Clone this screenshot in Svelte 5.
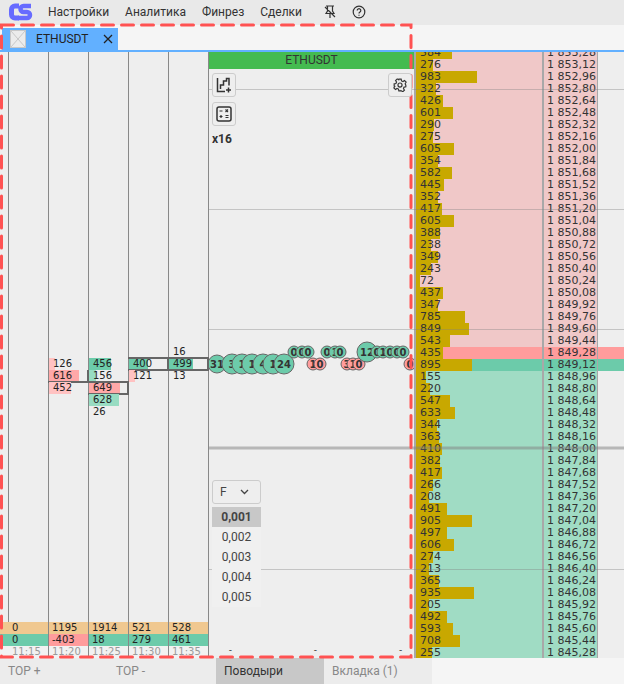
<script>
  const menu = ['Настройки', 'Аналитика', 'Финрез', 'Сделки'];

  const columns = [
    { time: '11:15', top: '0', delta: '0', cells: [] },
    {
      time: '11:20', top: '1195', delta: '-403', neg: true,
      cells: [
        null,
        { v: 126, c: 'pink' },
        { v: 616, c: 'red', poc: 'open' },
        { v: 452, c: 'pink' }
      ]
    },
    {
      time: '11:25', top: '1914', delta: '18',
      cells: [
        null,
        { v: 456, c: 'green' },
        { v: 156, c: 'mint' },
        { v: 649, c: 'red', poc: 'box' },
        { v: 628, c: 'mint' },
        { v: 26, c: 'none' }
      ]
    },
    {
      time: '11:30', top: '521', delta: '279',
      cells: [
        null,
        { v: 400, c: 'green', poc: 'box' },
        { v: 121, c: 'pink' }
      ]
    },
    {
      time: '11:35', top: '528', delta: '461',
      cells: [
        { v: 16, c: 'none' },
        { v: 499, c: 'green', poc: 'box' },
        { v: 13, c: 'none' }
      ]
    }
  ];

  const volumes = [
    584, 276, 983, 322, 426, 601, 290, 275, 605, 354, 582, 445, 352, 417, 605, 388, 238,
    349, 243, 72, 437, 347, 785, 849, 543, 435, 895, 155, 220, 547, 633, 344, 363, 410,
    382, 417, 266, 208, 491, 905, 497, 606, 274, 213, 365, 935, 205, 492, 593, 708, 255
  ];

  function price(i) {
    const s = (1853.28 - i * 0.16).toFixed(2).replace('.', ',');
    return s[0] + '\u00a0' + s.slice(1);
  }

  function rowClass(i) {
    if (i === 25) return 'best-ask';
    if (i === 26) return 'best-bid';
    return i < 25 ? 'ask' : 'bid';
  }

  // trade bubbles, in draw order
  const bubbles = [
    { x: 8, y: 312, r: 9, t: '31' },
    { x: 23, y: 312, r: 10, t: '3' },
    { x: 33, y: 312, r: 10, t: '1' },
    { x: 43, y: 312, r: 10, t: '1' },
    { x: 54, y: 312, r: 10, t: '4' },
    { x: 64, y: 312, r: 10, t: '1' },
    { x: 75, y: 312, r: 10, t: '24' },
    { x: 85, y: 300, r: 6, t: '0' },
    { x: 93, y: 300, r: 6, t: '0' },
    { x: 99, y: 300, r: 6, t: '0' },
    { x: 104, y: 312, r: 6, t: '1', s: true },
    { x: 111, y: 312, r: 6, t: '0', s: true },
    { x: 118, y: 300, r: 6, t: '0' },
    { x: 126, y: 300, r: 6, t: '1' },
    { x: 131, y: 300, r: 6, t: '0' },
    { x: 138, y: 312, r: 6, t: '3', s: true },
    { x: 144, y: 312, r: 6, t: '1', s: true },
    { x: 150, y: 312, r: 6, t: '0', s: true },
    { x: 158, y: 300, r: 10, t: '12' },
    { x: 168, y: 300, r: 6, t: '0' },
    { x: 174, y: 300, r: 6, t: '1' },
    { x: 181, y: 300, r: 6, t: '0' },
    { x: 188, y: 300, r: 6, t: '0' },
    { x: 194, y: 300, r: 6, t: '0' },
    { x: 201, y: 312, r: 6, t: '0', s: true }
  ];

  const steps = ['0,002', '0,003', '0,004', '0,005'];
</script>

<div class="page">
  <header class="menu">
    <svg class="logo" width="24" height="18" viewBox="0 0 24 18">
      <path d="M10 3H6a3.5 3.5 0 0 0-3.500 3.500v5A3.500 3.500 0 0 0 6 15h4" fill="none" stroke="#676bff" stroke-width="5" />
      <path d="M22 3h-7.500a3 3 0 0 0 0 6h3.500a3 3 0 0 1 0 6H9" fill="none" stroke="#676bff" stroke-width="4.500" />
    </svg>
    <nav>
      {#each menu as item}
        <span>{item}</span>
      {/each}
    </nav>
    <svg class="pin" width="14" height="14" viewBox="0 0 14 14" fill="none" stroke="#333" stroke-width="1.200">
      <path d="M3 1h8M4.500 1v5L3 8.500h8L9.500 6V1M7 8.500V13M2 2l10 10" />
    </svg>
    <svg class="help" width="14" height="14" viewBox="0 0 14 14" fill="none" stroke="#333" stroke-width="1.200">
      <circle cx="7" cy="7" r="5.800" />
      <path d="M5.200 5.500a1.800 1.800 0 1 1 2.700 1.600c-.6.300-.9.700-.9 1.300" />
      <path d="M7 9.800v1" />
    </svg>
  </header>

  <div class="tabs">
    <div class="tab">
      <svg width="16" height="18" viewBox="0 0 16 18">
        <rect x=".5" y=".5" width="15" height="17" fill="#ececec" stroke="#c8c8c8" />
        <path d="M1 1l14 16M15 1L1 17" stroke="#c8c8c8" />
      </svg>
      <span class="tab-title">ETHUSDT</span>
      <svg class="tab-close" width="10" height="10" viewBox="0 0 10 10">
        <path d="M1 1l8 8M9 1L1 9" stroke="#222" stroke-width="1.300" />
      </svg>
    </div>
  </div>

  <main class="main">
    <section class="clusters">
      <div class="gutter">
        <div class="stats">
          <div class="stat top"></div>
          <div class="stat delta"></div>
          <div class="stat time"></div>
        </div>
      </div>
      {#each columns as col}
        <div class="col">
          <div class="cells">
            {#each col.cells as cell}
              {#if cell}
                <div class="cell {cell.poc || ''}">
                  <i class={cell.c} style="width: {cell.v * 0.048}px"></i>
                  <span>{cell.v}</span>
                </div>
              {:else}
                <div class="cell"></div>
              {/if}
            {/each}
          </div>
          <div class="stats">
            <div class="stat top">{col.top}</div>
            <div class="stat delta" class:neg={col.neg}>{col.delta}</div>
            <div class="stat time">{col.time}</div>
          </div>
        </div>
      {/each}
    </section>

    <section class="chart">
      <div class="chart-head">ETHUSDT</div>
      <svg class="bubbles" width="205" height="589" viewBox="0 0 205 589">
        {#each bubbles as b}
          <circle cx={b.x} cy={b.y - 17} r={b.r} fill={b.s ? '#ff9c9c' : '#6ccbaa'} stroke="#666" stroke-width="1" />
          <text x={b.x} y={b.y - 13.500} text-anchor="middle">{b.t}</text>
        {/each}
      </svg>
      <div class="tools">
        <div class="tool-row">
          <button aria-label="add chart">
            <svg width="16" height="16" viewBox="0 0 16 16" fill="none" stroke="#333" stroke-width="1.500">
              <path d="M1.500 1v13.500H9" />
              <path d="M4.500 12V8h3V4h3V1.500h2.500v7" />
              <path d="M10 13h5M12.500 10.500v5" />
            </svg>
          </button>
          <button aria-label="settings">
            <svg width="14" height="14" viewBox="0 0 24 24" fill="none" stroke="#333" stroke-width="2">
              <circle cx="12" cy="12" r="3.500" />
              <path d="M10 2h4l.6 3 2.500 1.100 2.600-1.700 2.800 2.800-1.700 2.600L22 12.300V15l-3 .6-1.100 2.500 1.700 2.600-2.800 2.800L14 21.800V22h-4l-.6-3-2.500-1.100-2.600 1.700-2.800-2.800 1.700-2.600L2 13.700V10l3-.6 1.100-2.500-1.700-2.600 2.800-2.800 2.600 1.700L10 2z" />
            </svg>
          </button>
        </div>
        <button aria-label="calculator">
          <svg width="16" height="16" viewBox="0 0 16 16" fill="none" stroke="#333" stroke-width="1.200">
            <rect x="1" y="1" width="14" height="14" rx="2" stroke-width="1.500" />
            <path d="M3.500 5h3M9.500 3.500l2.500 2.500M12 3.500L9.500 6M3.500 10.500h3M5 9v3M9.500 9.500h3M9.500 11.500h3" />
          </svg>
        </button>
        <div class="mult">x16</div>
      </div>

      <div class="filter">
        <div class="select">
          <span>F</span>
          <svg width="9" height="6" viewBox="0 0 9 6" fill="none" stroke="#444" stroke-width="1.300"><path d="M1 1l3.500 3.500L8 1" /></svg>
        </div>
        <div class="step current">0,001</div>
        {#each steps as s}
          <div class="step">{s}</div>
        {/each}
      </div>
      <div class="dashes">
        <span>-</span><span>-</span><span>-</span>
      </div>
    </section>

    <section class="dom">
      <div class="ladder">
        {#each volumes as v, i}
          <div class="row {rowClass(i)}">
            <div class="vol">
              <i style="width: {v * 0.0623}px"></i>
              <span>{v}</span>
            </div>
            <div class="price">{price(i)}</div>
            <div class="rest"></div>
          </div>
        {/each}
      </div>
    </section>

    <svg class="grid" width="415" height="606" viewBox="0 0 415 606">
      <path d="M0 37.500h415M0 157.500h415M0 277.500h415M0 517.500h415" stroke="#808080" stroke-opacity=".38" />
      <path d="M0 396h415" stroke="#808080" stroke-opacity=".5" stroke-width="3" />
    </svg>
  </main>

  <footer class="bottom">
    <div class="btab wide">TOP +</div>
    <div class="btab wide">TOP -</div>
    <div class="btab active">Поводыри</div>
    <div class="btab">Вкладка (1)</div>
  </footer>

  <svg class="marker" width="624" height="684" viewBox="0 0 624 684">
    <rect x="1.500" y="25" width="409.500" height="632" fill="none" stroke="#ff5252" stroke-width="3" stroke-dasharray="12 8" stroke-linecap="round" />
  </svg>
</div>

<style>
  :global(body) {
    margin: 0;
    background: #eee;
  }

  .page {
    position: relative;
    width: 624px;
    height: 684px;
    overflow: hidden;
    display: flex;
    flex-direction: column;
    font-family: Roboto, sans-serif;
    font-size: 12px;
    color: #333;
    background: #eee;
  }

  .menu {
    height: 25px;
    flex: none;
    display: flex;
    align-items: center;
    padding-left: 9px;
    background: #e9e9e9;
    box-sizing: border-box;
  }

  .logo {
    margin-right: 15px;
    margin-top: -1px;
  }

  .menu nav {
    display: flex;
    gap: 16px;
    margin-right: 21px;
    margin-top: -2px;
  }

  .pin {
    margin-top: -2px;
    margin-right: 15px;
  }

  .help {
    margin-top: -1px;
  }

  .tabs {
    height: 25px;
    flex: none;
    display: flex;
    align-items: flex-end;
    padding-left: 2px;
    background: #f5f5f5;
    border-bottom: 2px solid #62b0ff;
  }

  .tab {
    width: 116px;
    height: 22px;
    display: flex;
    align-items: center;
    padding-left: 8px;
    box-sizing: border-box;
    background: #62b0ff;
  }

  .tab-title {
    margin-left: 10px;
    color: #222;
  }

  .tab-close {
    margin-left: 15px;
  }

  .main {
    position: relative;
    height: 606px;
    flex: none;
    display: flex;
    overflow: hidden;
  }

  .clusters {
    width: 209px;
    flex: none;
    display: flex;
    font-family: "DejaVu Sans", sans-serif;
    font-size: 10px;
    color: #222;
  }

  .gutter {
    width: 9px;
    box-sizing: border-box;
    border-right: 1px solid #888;
    display: flex;
    flex-direction: column;
    justify-content: flex-end;
  }

  .gutter .stats {
    margin-right: -1px;
  }

  .col {
    width: 40px;
    box-sizing: border-box;
    border-right: 1px solid #888;
    display: flex;
    flex-direction: column;
  }

  .cells {
    padding-top: 294px;
  }

  .cell {
    position: relative;
    height: 12px;
    line-height: 12px;
    box-sizing: border-box;
  }

  .cell i {
    position: absolute;
    left: 0;
    top: 0;
    bottom: 0;
  }

  .cell span {
    position: relative;
    padding-left: 4px;
  }

  .cell i.red {
    background: #ffa8a8;
  }

  .cell i.pink {
    background: #ffc2c2;
  }

  .cell i.green {
    background: #6ccbaa;
  }

  .cell i.mint {
    background: #98dcc2;
  }

  .cell.box::after,
  .cell.open::after {
    content: '';
    position: absolute;
    left: -1px;
    right: -1px;
    top: -1px;
    bottom: -1px;
    border: solid #666;
    border-width: 2px 2px 2px 0;
  }

  .cell.open::after {
    border-top: 0;
    top: 0;
  }

  .stats {
    margin-top: auto;
  }

  .stat {
    height: 12px;
    line-height: 12px;
    padding-left: 3px;
    white-space: nowrap;
  }

  .stat.top {
    background: #f0c890;
  }

  .stat.delta {
    background: #6ccbaa;
  }

  .stat.delta.neg {
    background: #ff9c9c;
  }

  .stat.time {
    color: #999;
    background: #f2f2f2;
  }

  .chart {
    position: relative;
    width: 205px;
    flex: none;
    display: flex;
    flex-direction: column;
    overflow: hidden;
    background: #eee;
  }

  .chart-head {
    height: 17px;
    flex: none;
    text-align: center;
    line-height: 17px;
    background: #44bb50;
  }

  .bubbles {
    position: absolute;
    left: 0;
    top: 17px;
  }

  .bubbles text {
    font-family: "DejaVu Sans", sans-serif;
    font-size: 10px;
    font-weight: 700;
    fill: #333;
  }

  .tools {
    position: relative;
    z-index: 2;
    padding: 4px 2px 0 3px;
    display: flex;
    flex-direction: column;
    align-items: flex-start;
    gap: 5px;
  }

  .tool-row {
    width: 100%;
    display: flex;
    justify-content: space-between;
  }

  .tools button {
    width: 24px;
    height: 24px;
    padding: 0;
    display: flex;
    align-items: center;
    justify-content: center;
    border: 1px solid #ccc;
    border-radius: 3px;
    background: #eee;
  }

  .mult {
    font-size: 12px;
    font-weight: 700;
    line-height: 14px;
    margin-top: 1px;
    color: #333;
  }

  .filter {
    position: relative;
    z-index: 2;
    width: 49px;
    margin: 334px 0 0 3px;
    text-align: center;
    color: #444;
  }

  .select {
    height: 24px;
    box-sizing: border-box;
    display: flex;
    align-items: center;
    justify-content: space-between;
    padding: 0 11px 0 7px;
    margin-bottom: 3px;
    border: 1px solid #ccc;
    border-radius: 3px;
    background: #eee;
  }

  .step {
    height: 20px;
    line-height: 20px;
    background: #f0f0f0;
  }

  .step.current {
    font-weight: 700;
    background: #c8c8c8;
  }

  .dashes {
    position: absolute;
    left: 20px;
    bottom: 0;
    width: 173px;
    display: flex;
    justify-content: space-between;
    font-size: 10px;
    line-height: 14px;
    color: #444;
  }

  .dom {
    width: 210px;
    flex: none;
    box-sizing: border-box;
    border-left: 2px solid #a8a8a8;
    overflow: hidden;
    font-family: "DejaVu Sans", sans-serif;
    font-size: 11px;
    color: #333;
  }

  .ladder {
    margin-top: -5px;
  }

  .row {
    height: 12px;
    line-height: 12px;
    display: flex;
    white-space: nowrap;
  }

  .vol {
    position: relative;
    width: 126px;
  }

  .vol i {
    position: absolute;
    left: 0;
    top: 0;
    bottom: 0;
    background: #c8a800;
  }

  .vol span {
    position: relative;
    padding-left: 4px;
  }

  .price {
    width: 54px;
    padding-left: 3px;
    box-sizing: border-box;
    border-left: 2px solid #a8a8a8;
    border-right: 1px solid #a8a8a8;
    width: 56px;
  }

  .rest {
    flex: 1;
  }

  .ask .vol,
  .ask .price {
    background: #f0c8c8;
  }

  .bid .vol,
  .bid .price {
    background: #a0dcc4;
  }

  .best-ask {
    background: #ff9c9c;
  }

  .best-bid {
    background: #6ccbaa;
  }

  .grid {
    position: absolute;
    left: 209px;
    top: 0;
    pointer-events: none;
  }

  .bottom {
    flex: 1;
    display: flex;
    background: #f5f5f5;
    border-bottom: 1px solid #ddd;
  }

  .btab {
    width: 108px;
    padding-left: 8px;
    box-sizing: border-box;
    line-height: 26px;
    color: #888;
    background: #ececec;
  }

  .btab.active {
    color: #333;
    background: #c8c8c8;
  }

  .marker {
    position: absolute;
    left: 0;
    top: 0;
    pointer-events: none;
  }
</style>
